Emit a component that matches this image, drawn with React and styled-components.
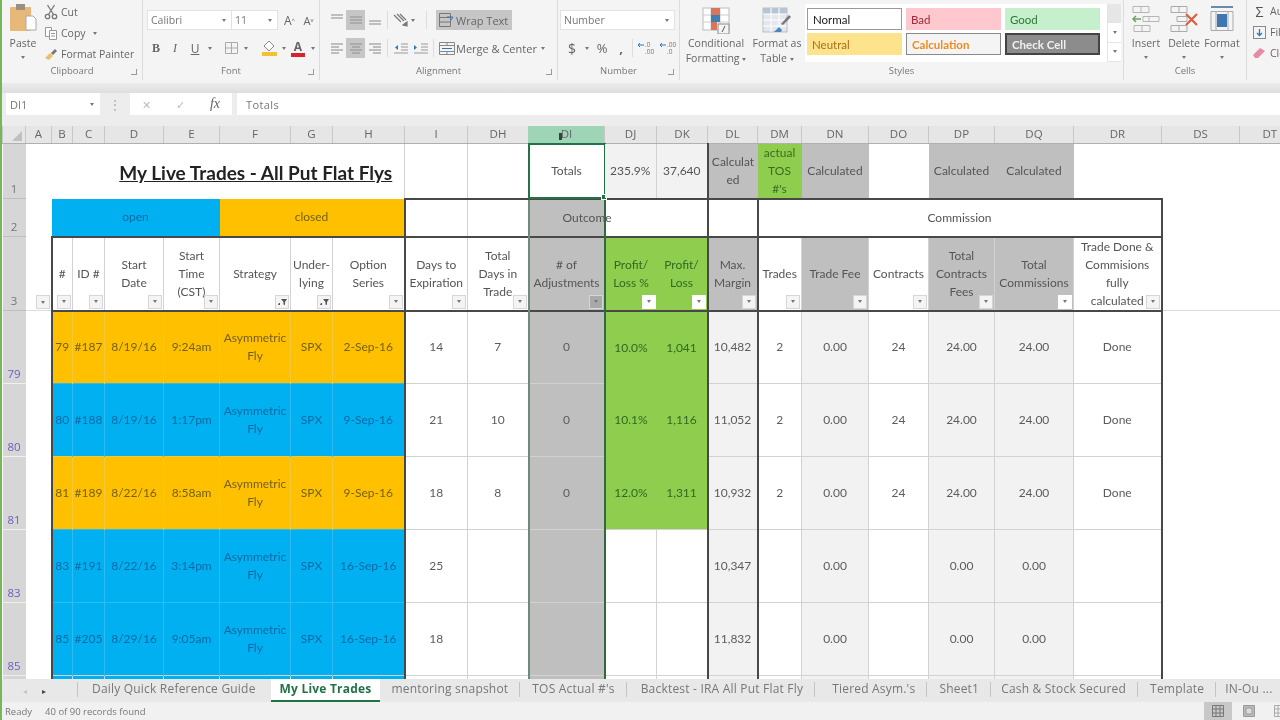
import styled, { createGlobalStyle } from 'styled-components';

const GlobalStyle = createGlobalStyle`
  html, body {
    margin: 0;
    padding: 0;
    overflow: hidden;
    background: #fff;
  }
`;

const UI = `"Open Sans", "Noto Sans", sans-serif`;
const SHEET = `Lato, "Liberation Sans", sans-serif`;

const ORANGE = '#ffc000';
const BLUE = '#00b0f0';
const GRAY = '#bfbfbf';
const GREEN = '#8fcd4e';
const PALE = '#f2f2f2';
const DARK = '#484848';
const GRID = '#d2d2d2';

const Page = styled.div`
  width: 1278px;
  height: 720px;
  border-left: 2px solid #78b65a;
  display: flex;
  flex-direction: column;
  overflow: hidden;
  font-family: ${UI};
  color: #555;
  filter: blur(0.5px);
`;

/* ribbon */
const Ribbon = styled.div`
  height: 83px;
  flex: none;
  display: flex;
  background: #f4f4f4;
  overflow: hidden;
`;

const Group = styled.section`
  width: ${(p) => p.$w}px;
  flex: none;
  display: flex;
  flex-direction: column;
  position: relative;
  box-sizing: border-box;
  border-right: ${(p) => (p.$last ? 'none' : '1px solid #dcdcdc')};
  margin-bottom: 3px;
`;

const GroupBody = styled.div`
  flex: 1;
  min-height: 0;
  display: flex;
  flex-direction: ${(p) => (p.$stack ? 'column' : 'row')};
  gap: ${(p) => p.$gap || 0}px;
  padding: ${(p) => p.$pad || '0'};
`;

const GroupLabel = styled.div`
  height: 16px;
  font-size: 9.5px;
  line-height: 14px;
  text-align: center;
  color: #777;
`;

const Launcher = styled.span`
  position: absolute;
  right: 5px;
  bottom: 5px;
  width: 5px;
  height: 5px;
  border-right: 1px solid #999;
  border-bottom: 1px solid #999;
`;

const BigButton = styled.div`
  width: ${(p) => p.$w}px;
  flex: none;
  display: flex;
  flex-direction: column;
  align-items: center;
  padding-top: ${(p) => p.$top ?? 6}px;
  font-size: 10.5px;
  line-height: 15px;
  text-align: center;
  color: #666;
  white-space: pre;

  svg { flex: none; margin-bottom: ${(p) => p.$iconGap ?? 3}px; }
`;

const Caret = styled.span`
  display: inline-block;
  width: 0;
  height: 0;
  border-left: 2.5px solid transparent;
  border-right: 2.5px solid transparent;
  border-top: 3px solid #777;
  vertical-align: middle;
  margin: ${(p) => p.$m || '0'};
`;

const ClipList = styled.div`
  display: flex;
  flex-direction: column;
  padding-top: 2px;
`;

const ClipItem = styled.div`
  height: 21px;
  display: flex;
  align-items: center;
  gap: 3px;
  font-size: 10.5px;
  color: #666;
  white-space: nowrap;
`;

const ToolRow = styled.div`
  height: 20px;
  display: flex;
  align-items: center;
  flex: none;
`;

const Select = styled.div`
  width: ${(p) => p.$w}px;
  height: 20px;
  box-sizing: border-box;
  background: #fff;
  border: 1px solid #e2e2e2;
  border-left: ${(p) => (p.$joined ? 'none' : '1px solid #e2e2e2')};
  padding: 0 5px 0 3px;
  display: flex;
  align-items: center;
  justify-content: space-between;
  font-size: 10.5px;
  color: #777;
  flex: none;
`;

const Tool = styled.div`
  width: ${(p) => p.$w}px;
  height: 20px;
  margin-left: ${(p) => p.$ml || 0}px;
  flex: none;
  display: flex;
  align-items: center;
  justify-content: center;
  font-family: ${(p) => (p.$serif ? '"Liberation Serif", serif' : UI)};
  font-size: ${(p) => p.$size || 12}px;
  font-weight: ${(p) => (p.$bold ? 700 : 400)};
  font-style: ${(p) => (p.$italic ? 'italic' : 'normal')};
  text-decoration: ${(p) => (p.$under ? 'underline' : 'none')};
  color: ${(p) => p.$ink || '#666'};
  background: ${(p) => (p.$on ? '#c6c6c6' : 'transparent')};
`;

const FontColorMark = styled.span`
  width: 14px;
  height: 17px;
  box-sizing: border-box;
  display: block;
  text-align: center;
  font-size: 12px;
  line-height: 13px;
  font-weight: 700;
  color: #666;
  border-bottom: 4px solid #d8232a;
`;

const ToolSep = styled.span`
  width: 1px;
  height: 18px;
  flex: none;
  background: #ddd;
  margin: 0 ${(p) => p.$m ?? 4}px;
`;

const TextTool = styled.div`
  height: 20px;
  display: flex;
  align-items: center;
  padding: 0 4px 0 2px;
  font-size: 11px;
  color: #666;
  white-space: nowrap;
  flex: none;
  background: ${(p) => (p.$on ? '#c6c6c6' : 'transparent')};
`;

const Gallery = styled.div`
  width: 302px;
  height: 58px;
  margin: 4px 0 0 3px;
  padding: 4px 0 0 2px;
  box-sizing: border-box;
  background: #fff;
  display: grid;
  grid-template-columns: repeat(3, 95px);
  grid-auto-rows: 22px;
  gap: 3px 4px;
  flex: none;
`;

const StyleChip = styled.div`
  box-sizing: border-box;
  padding-left: 5px;
  display: flex;
  align-items: center;
  font-family: ${SHEET};
  font-size: 11.5px;
  font-weight: ${(p) => (p.$bold ? 700 : 400)};
  color: ${(p) => p.$ink};
  background: ${(p) => p.$fill};
  border: ${(p) => p.$edge || 'none'};
`;

const GalleryScroll = styled.div`
  width: 13px;
  height: 58px;
  margin-top: 4px;
  flex: none;
  display: flex;
  flex-direction: column;
  background: #fff;
  border-left: 1px solid #e4e4e4;

  > span {
    flex: 1;
    display: flex;
    align-items: center;
    justify-content: center;
    border-bottom: 1px solid #e4e4e4;
  }

  > span:first-child { background: #e6e6e6; }
`;

const Edit = styled.div`
  display: flex;
  flex-direction: column;
  gap: 3px;
  padding: 2px 0 0 5px;
  font-size: 10.5px;
  color: #666;
  white-space: nowrap;
`;

const EditItem = styled.div`
  height: 18px;
  display: flex;
  align-items: center;
  gap: 3px;

  > * { flex: none; }
`;

const Sigma = styled.span`
  font-size: 14px;
  color: #555;
  width: 15px;
  text-align: center;
`;

const Band = styled.div`
  height: 10px;
  flex: none;
  background: linear-gradient(#ececec, #dedede);
`;

/* formula bar */
const FormulaBar = styled.div`
  height: 33px;
  flex: none;
  display: flex;
  align-items: flex-start;
  background: #ededed;
  font-size: 11px;
  color: #777;
`;

const NameBox = styled.div`
  width: 94px;
  height: 22px;
  margin-left: 4px;
  padding: 0 6px 0 4px;
  box-sizing: border-box;
  background: #fff;
  display: flex;
  align-items: center;
  justify-content: space-between;
  flex: none;
`;

const Grip = styled.span`
  width: 30px;
  height: 22px;
  flex: none;
  display: flex;
  align-items: center;
  justify-content: center;
  color: #aaa;
  font-size: 12px;
`;

const FormulaTools = styled.div`
  width: 102px;
  height: 22px;
  background: #fff;
  flex: none;
  display: flex;
  align-items: center;
  justify-content: space-between;
  padding: 0 12px 0 12px;
  box-sizing: border-box;
  color: #bbb;
`;

const Fx = styled.span`
  font-family: "Liberation Serif", serif;
  font-style: italic;
  font-size: 14px;
  color: #666;
`;

const FormulaInput = styled.div`
  flex: 1;
  height: 22px;
  margin-left: 5px;
  padding-left: 9px;
  background: #fff;
  display: flex;
  align-items: center;
  font-size: 11px;
  letter-spacing: 0.4px;
`;

/* sheet */
const Sheet = styled.div`
  flex: 1;
  min-height: 0;
  overflow: hidden;
  background: #fff;
`;

const Grid = styled.table`
  width: 1297px;
  table-layout: fixed;
  border-collapse: collapse;
  font-family: ${SHEET};
  font-size: 12px;
  line-height: 18px;
  color: #555;
`;

const ColHead = styled.th`
  height: 17px;
  padding: 0;
  position: relative;
  box-sizing: border-box;
  font-family: ${UI};
  font-weight: 400;
  font-size: 11.5px;
  line-height: 16px;
  color: #666;
  background: ${(p) => (p.$on ? '#9dd5b6' : '#e6e6e6')};
  border-left: 1px solid ${(p) => (p.$on ? '#9dd5b6' : '#c8c8c8')};
  border-bottom: 1px solid ${(p) => (p.$on ? '#217346' : '#b0b0b0')};
`;

const CornerMark = styled.span`
  position: absolute;
  right: 3px;
  bottom: 2px;
  width: 0;
  height: 0;
  border-left: 10px solid transparent;
  border-bottom: 10px solid #c0c0c0;
`;

const PointerMark = styled.span`
  position: absolute;
  left: 30px;
  top: 7px;
  width: 3px;
  height: 7px;
  background: #2c4a3a;
`;

const RowHead = styled.th`
  padding: 0 0 2px;
  box-sizing: border-box;
  vertical-align: bottom;
  font-family: ${UI};
  font-weight: 400;
  font-size: 11.5px;
  line-height: 14px;
  color: ${(p) => (p.$filtered ? '#6a5fc0' : '#777')};
  background: #d6d6d6;
  border-bottom: 1px solid ${(p) => (p.$filtered ? '#f0f0f0' : '#bdbdbd')};
`;

const Row = styled.tr`
  height: ${(p) => p.$h}px;
`;

const Cell = styled.td`
  position: relative;
  padding: 0;
  text-align: center;
  white-space: pre;
  color: ${(p) => p.$ink || '#555'};
  background: ${(p) => p.$fill || 'transparent'};
  border-left: ${(p) => p.$left || 'none'};
  border-top: ${(p) => p.$top || 'none'};
  ${(p) => (p.$bottom ? `border-bottom: ${p.$bottom};` : '')}
`;

const Title = styled.span`
  display: inline-block;
  padding: 4px 0 0 3px;
  font-size: 19px;
  line-height: 22px;
  font-weight: 700;
  color: #222;
  text-decoration: underline;
`;

const Overflowing = styled.span`
  display: block;
  text-align: left;
  padding-left: 33px;
`;

const Selection = styled.span`
  position: absolute;
  inset: -1px;
  border: 2px solid #217346;
  pointer-events: none;

  &::after {
    content: '';
    position: absolute;
    right: -3px;
    bottom: -3px;
    width: 4px;
    height: 4px;
    background: #217346;
    border: 1px solid #fff;
  }
`;

const FilterBox = styled.span`
  position: absolute;
  right: 1px;
  bottom: 1px;
  width: 14px;
  height: 14px;
  box-sizing: border-box;
  display: flex;
  align-items: center;
  justify-content: center;
  background: ${(p) => p.$tone || '#f4f4f4'};
  border: 1px solid ${(p) => (p.$tone === '#fff' ? '#fff' : '#d6d6d6')};
`;

/* sheet tabs */
const TabBar = styled.div`
  height: 23px;
  flex: none;
  display: flex;
  align-items: stretch;
  background: #e8e8e8;
  overflow: hidden;
  font-size: 12px;
  color: #777;
`;

const TabNav = styled.div`
  width: 76px;
  flex: none;
  display: flex;
  align-items: center;
  box-sizing: border-box;
  padding-left: 21px;
  gap: 15px;
  position: relative;
  font-size: 8px;

  &::after {
    content: '';
    position: absolute;
    right: 0;
    top: 3px;
    bottom: 5px;
    width: 1px;
    background: #c4c4c4;
  }
`;

const NavArrow = styled.span`
  color: ${(p) => (p.$dim ? '#c4c4c4' : '#444')};
`;

const Tab = styled.div`
  flex: none;
  position: relative;
  display: flex;
  align-items: center;
  padding: 0 ${(p) => (p.$active ? 9 : 12)}px 5px;
  white-space: nowrap;
  letter-spacing: 0.2px;
  margin-left: ${(p) => p.$ml || 0}px;
  ${(p) =>
    p.$active
      ? `
    background: #fff;
    color: #217346;
    font-weight: 700;
    border-bottom: 2px solid #217346;
    padding-bottom: 3px;
  `
      : ''}
  ${(p) =>
    p.$sep
      ? `
    &::after {
      content: '';
      position: absolute;
      right: 0;
      top: 3px;
      bottom: 5px;
      width: 1px;
      background: #c4c4c4;
    }
  `
      : ''}
`;

/* status bar */
const StatusBar = styled.div`
  height: 18px;
  flex: none;
  display: flex;
  align-items: center;
  background: #f1f1f1;
  font-size: 9.5px;
  color: #777;
  padding-left: 3px;
  overflow: hidden;
`;

const StatusText = styled.span`
  margin-right: ${(p) => p.$mr || 0}px;
`;

const ViewButtons = styled.div`
  margin-left: auto;
  margin-right: -14px;
  display: flex;
  height: 18px;
  gap: 3px;
`;

const ViewButton = styled.span`
  width: 28px;
  height: 18px;
  flex: none;
  display: flex;
  align-items: center;
  justify-content: center;
  background: ${(p) => (p.$on ? '#c8c8c8' : 'transparent')};
`;

/* icons */
const PasteIcon = () => (
  <svg width="28" height="30" viewBox="0 0 28 30">
    <rect x="1" y="4" width="21" height="24" rx="1" fill="#e8b878" />
    <rect x="7" y="1" width="9" height="6" fill="#9a8f80" />
    <path d="M17 13h7l3 3v11H17z" fill="#fff" stroke="#aaa" />
  </svg>
);

const CutIcon = () => (
  <svg width="14" height="16" viewBox="0 0 14 16" fill="none" stroke="#777" strokeWidth="1.3">
    <circle cx="3.5" cy="12.5" r="2.2" />
    <circle cx="10.5" cy="12.5" r="2.2" />
    <path d="M4.5 10.5L10.5 1M9.5 10.5L3.5 1" />
  </svg>
);

const CopyIcon = () => (
  <svg width="14" height="15" viewBox="0 0 14 15" fill="#fff" stroke="#999">
    <path d="M1.5 1.5h6v9h-6z" />
    <path d="M5.5 4.5h7v9h-7z" />
    <path d="M7 7.5h4M7 10h4" />
  </svg>
);

const PainterIcon = () => (
  <svg width="14" height="14" viewBox="0 0 14 14">
    <path d="M1 11l5-5 3 3-4 4z" fill="#e8c06a" />
    <path d="M7 6l4-4 2 2-4 4z" fill="#777" />
  </svg>
);

const BorderIcon = () => (
  <svg width="15" height="14" viewBox="0 0 15 14" fill="none" stroke="#aaa">
    <path d="M1.5 1.5h12v11h-12zM7.5 1.5v11M1.5 7h12" />
  </svg>
);

const BucketIcon = () => (
  <svg width="17" height="16" viewBox="0 0 17 16">
    <path d="M8 1l5 5-5 5-5-5z" fill="#fff" stroke="#888" />
    <rect x="1" y="12" width="15" height="4" fill="#f2c230" />
  </svg>
);

const Lines = ({ widths, align = 'center', top = 3 }) => (
  <svg width="16" height="14" viewBox="0 0 16 14" stroke="#999" strokeWidth="1.2">
    {widths.map((w, i) => {
      const x = align === 'left' ? 2 : align === 'right' ? 14 - w : 8 - w / 2;
      return <path key={i} d={`M${x} ${top + i * 3}h${w}`} />;
    })}
  </svg>
);

const OrientIcon = () => (
  <svg width="17" height="15" viewBox="0 0 17 15" fill="none" stroke="#777" strokeWidth="1.2">
    <path d="M2 2l7 7M5 1l7 7M8 1l6 6" />
    <path d="M11 12l4-3v4z" fill="#777" />
  </svg>
);

const IndentIcon = ({ flip }) => (
  <svg width="16" height="13" viewBox="0 0 16 13" stroke="#999">
    <path d="M8 2h7M8 5h7M8 8h7M1 11h14" />
    <path d={flip ? 'M1 3v5l3-2.5z' : 'M5 3v5L2 5.500z'} fill="#2b79b8" stroke="none" />
  </svg>
);

const WrapIcon = () => (
  <svg width="18" height="16" viewBox="0 0 18 16" fill="none" stroke="#777">
    <path d="M1.500 1.500h11v13h-11zM1.500 5.500h11M1.500 10h11" />
    <path d="M9 5h6l-2 3" stroke="#2b79b8" />
  </svg>
);

const MergeIcon = () => (
  <svg width="18" height="15" viewBox="0 0 18 15" fill="none" stroke="#888">
    <path d="M1.500 1.500h15v12h-15zM1.500 4.500h15M1.500 10.500h15M9 1.500v3M9 10.500v3" />
    <path d="M4 7.500h10" stroke="#2b79b8" />
  </svg>
);

const DecimalIcon = ({ top, bottom }) => (
  <svg width="20" height="16" viewBox="0 0 20 16" fontSize="6.500" fill="#777" fontFamily="Open Sans">
    <text x="8" y="7">{top}</text>
    <text x="8" y="14">{bottom}</text>
    <path d="M1 5h6M1 5l2-2M1 5l2 2" stroke="#2b79b8" fill="none" />
  </svg>
);

const CondIcon = () => (
  <svg width="28" height="27" viewBox="0 0 28 27">
    <rect x="1" y="1" width="26" height="22" fill="#fff" stroke="#bbb" />
    <path d="M1 8h26M1 15h26M9 1v22M18 1v22" stroke="#ccc" />
    <rect x="9" y="1" width="9" height="7" fill="#d9765a" />
    <rect x="9" y="8" width="9" height="7" fill="#3f7fb5" />
    <rect x="9" y="15" width="6" height="8" fill="#d9765a" />
    <rect x="16" y="17" width="11" height="10" fill="#f4f4f4" stroke="#888" />
    <path d="M20 25l3-6" stroke="#555" />
  </svg>
);

const TableIcon = () => (
  <svg width="30" height="27" viewBox="0 0 30 27">
    <rect x="1" y="1" width="24" height="24" fill="#e4e8ee" stroke="#bbb" />
    <rect x="1" y="1" width="24" height="6" fill="#b8c4d4" />
    <path d="M1 7h24M1 13h24M1 19h24M9 1v24M17 1v24" stroke="#fff" />
    <path d="M19 17l8-9 2 2-8 8z" fill="#777" />
    <path d="M12 25l5-5 3 3-1 2z" fill="#4d86bf" />
  </svg>
);

const InsertIcon = () => (
  <svg width="30" height="28" viewBox="0 0 30 28" fill="none" stroke="#b5b5b5">
    <path d="M2 1.500h16v6H2zM10 1.500v6M3 20.500h16v6H3zM11 20.500v6M12 11.500h16v5H12zM18 11.500v5" />
    <path d="M10 14H2M5 11l-3 3 3 3" stroke="#76a060" strokeWidth="1.500" />
  </svg>
);

const DeleteIcon = () => (
  <svg width="30" height="28" viewBox="0 0 30 28" fill="none" stroke="#aaa">
    <path d="M2 1.500h16v6H2zM10 1.500v6M2 20.500h16v6H2zM10 20.500v6M8 11.500h10v5H8z" />
    <path d="M17 9l11 11M28 9L17 20" stroke="#d8603f" strokeWidth="2.200" />
  </svg>
);

const FormatIcon = () => (
  <svg width="26" height="28" viewBox="0 0 26 28" fill="none" stroke="#aaa">
    <path d="M2 2h22" stroke="#2b5f93" strokeWidth="1.400" />
    <path d="M2 6.500h22v19H2zM7 6.500v19M19 6.500v19" />
    <rect x="8" y="9" width="10" height="13" fill="#3f77b2" stroke="none" />
  </svg>
);

const FillIcon = () => (
  <svg width="15" height="15" viewBox="0 0 15 15" fill="none" stroke="#888">
    <rect x="1.500" y="1.500" width="12" height="12" />
    <path d="M7.500 4v6M5 8l2.500 2.500L10 8" stroke="#2b79b8" strokeWidth="1.300" />
  </svg>
);

const EraserIcon = () => (
  <svg width="15" height="14" viewBox="0 0 15 14">
    <path d="M1 9l7-7 5 3-7 7H3z" fill="#e88aa2" />
  </svg>
);

const Funnel = () => (
  <svg width="9" height="8" viewBox="0 0 9 8">
    <path d="M3 1h6L7 4v3L5.500 6.500V4z" fill="#555" />
    <path d="M0 7h2V5H1z" fill="#555" />
  </svg>
);

const ViewGrid = ({ tone = '#888' }) => (
  <svg width="12" height="12" viewBox="0 0 12 12" fill="none" stroke={tone}>
    <path d="M.5.500h11v11H.5zM4 .500v11M8 .500v11M.5 4h11M.5 8h11" />
  </svg>
);

const ViewPage = () => (
  <svg width="12" height="12" viewBox="0 0 12 12" fill="#bbb" stroke="#999">
    <path d="M.5.500h11v11H.5z" />
    <path d="M3 3h6v6H3z" fill="#ddd" />
  </svg>
);

/* data */
const COLS = [
  ['A', 26], ['B', 21], ['C', 32], ['D', 59], ['E', 56], ['F', 71], ['G', 42], ['H', 72],
  ['I', 63], ['DH', 61], ['DI', 76], ['DJ', 52], ['DK', 51], ['DL', 50], ['DM', 44],
  ['DN', 67], ['DO', 60], ['DP', 66], ['DQ', 79], ['DR', 88], ['DS', 78], ['DT', 60],
];
const KEYS = COLS.map((c) => c[0]);

const HEADERS = {
  B: '#', C: 'ID #', D: 'Start\nDate', E: 'Start\nTime\n(CST)', F: 'Strategy', G: 'Under-\nlying',
  H: 'Option\nSeries', I: 'Days to\nExpiration', DH: 'Total\nDays in\nTrade', DI: '# of\nAdjustments',
  DJ: 'Profit/\nLoss %', DK: 'Profit/\nLoss', DL: 'Max.\nMargin', DM: 'Trades', DN: 'Trade Fee',
  DO: 'Contracts', DP: 'Total\nContracts\nFees', DQ: 'Total\nCommissions',
  DR: 'Trade Done &\nCommisions\nfully\ncalculated',
};

const HEAD_FILL = {
  DI: GRAY, DJ: GREEN, DK: GREEN, DL: GRAY, DN: GRAY, DP: GRAY, DQ: GRAY,
};

const ROWS = [
  { n: 79, fill: ORANGE, id: '#187', date: '8/19/16', time: '9:24am', series: '2-Sep-16', dte: 14, total: 7, adj: 0, pct: '10.0%', pl: '1,041', margin: '10,482', done: true },
  { n: 80, fill: BLUE, id: '#188', date: '8/19/16', time: '1:17pm', series: '9-Sep-16', dte: 21, total: 10, adj: 0, pct: '10.1%', pl: '1,116', margin: '11,052', done: true },
  { n: 81, fill: ORANGE, id: '#189', date: '8/22/16', time: '8:58am', series: '9-Sep-16', dte: 18, total: 8, adj: 0, pct: '12.0%', pl: '1,311', margin: '10,932', done: true },
  { n: 83, fill: BLUE, id: '#191', date: '8/22/16', time: '3:14pm', series: '16-Sep-16', dte: 25, margin: '10,347' },
  { n: 85, fill: BLUE, id: '#205', date: '8/29/16', time: '9:05am', series: '16-Sep-16', dte: 18, margin: '11,832' },
];

// extra left margin keeps each tab where the reference has it
const TABS = [
  ['Daily Quick Reference Guide', 2], ['My Live Trades', 3], ['mentoring snapshot', -1], ["TOS Actual #'s", 0],
  ['Backtest - IRA All Put Flat Fly', 2], ["Tiered Asym.'s", 5], ['Sheet1', 0], ['Cash & Stock Secured', -2],
  ['Template', 0], ['IN-Ou ...', -3],
];

const thick = `2px solid ${DARK}`;
const thin = `1px solid ${GRID}`;

// vertical rule on the left of a column; tier 1 = title row, 2 = band row, 3 = headers, 4 = data
const leftRule = (key, tier) => {
  if (key === 'A') return 'none';
  if (key === 'DL') return thick;
  if (tier === 1) return key === 'DH' || key === 'DK' || key === 'I' ? thin : 'none';
  if (key === 'I' || key === 'DM' || key === 'DS') return thick;
  if (key === 'DI') return '2px solid #6a8c7c';
  if (key === 'DJ') return '2px solid #2f6b3f';
  if (key === 'B') return tier > 2 ? thick : 'none';
  if (key === 'DT') return 'none';
  return tier === 3 && key === 'DK' ? 'none' : thin;
};

const dataFill = (key, row) => {
  if (['B', 'C', 'D', 'E', 'F', 'G', 'H'].includes(key)) return row.fill;
  if (key === 'DI') return GRAY;
  if (key === 'DJ' || key === 'DK') return row.pct ? GREEN : '#fff';
  if (['DL', 'DN', 'DP', 'DQ'].includes(key)) return PALE;
  return '#fff';
};

const dataInk = (key, row) => {
  if (['B', 'C', 'D', 'E', 'F', 'G', 'H'].includes(key)) return row.fill === ORANGE ? '#75601a' : '#0b6aa6';
  if (key === 'DJ' || key === 'DK') return '#2f6a22';
  return '#5c5c5c';
};

const dataText = (row) => ({
  B: String(row.n), C: row.id, D: row.date, E: row.time, F: 'Asymmetric\nFly', G: 'SPX', H: row.series,
  I: row.dte, DH: row.total, DI: row.adj, DJ: row.pct, DK: row.pl, DL: row.margin,
  DM: row.done ? 2 : '', DN: '0.00', DO: row.done ? 24 : '',
  DP: row.done ? '24.00' : '0.00', DQ: row.done ? '24.00' : '0.00', DR: row.done ? 'Done' : '',
});

const filterTone = (key) => {
  if (key === 'DI') return '#a9a9a9';
  if (key === 'DJ' || key === 'DK' || key === 'DQ') return '#fff';
  return undefined;
};

const TitleRow = () => (
  <Row $h={55}>
    <RowHead>1</RowHead>
    <Cell $left="none" />
    <Cell colSpan={2} />
    <Cell colSpan={5}><Title>My Live Trades - All Put Flat Flys</Title></Cell>
    <Cell $left={leftRule('I', 1)} />
    <Cell $left={leftRule('DH', 1)} />
    <Cell $fill="#fff">
      Totals
      <Selection />
    </Cell>
    <Cell $fill={PALE}>235.9%</Cell>
    <Cell $fill={PALE} $left={leftRule('DK', 1)}>37,640</Cell>
    <Cell $fill={GRAY} $left={thick}>{'Calculat\ned'}</Cell>
    <Cell $fill={GREEN} $ink="#3d6b22">{"actual\nTOS\n#'s"}</Cell>
    <Cell $fill={GRAY}>Calculated</Cell>
    <Cell />
    <Cell $fill={GRAY}>Calculated</Cell>
    <Cell $fill={GRAY}>Calculated</Cell>
    <Cell />
    <Cell />
    <Cell />
  </Row>
);

const BandRow = () => (
  <Row $h={38}>
    <RowHead>2</RowHead>
    <Cell />
    <Cell colSpan={4} $fill={BLUE} $ink="#0b6aa6">open</Cell>
    <Cell colSpan={3} $fill={ORANGE} $ink="#75601a">closed</Cell>
    <Cell $left={thick} $top={thick} />
    <Cell $left={thin} $top={thick} />
    <Cell $fill={GRAY} $left={leftRule('DI', 2)} $top={thick}>
      <Overflowing>Outcome</Overflowing>
    </Cell>
    <Cell colSpan={2} $left={leftRule('DJ', 2)} $top={thick} />
    <Cell $left={thick} $top={thick} />
    <Cell colSpan={6} $left={thick} $top={thick}>Commission</Cell>
    <Cell $left={thick} />
    <Cell />
  </Row>
);

const HeaderRow = () => (
  <Row $h={73}>
    <RowHead>3</RowHead>
    {KEYS.map((key) => {
      const boxed = key !== 'A' && key !== 'DS' && key !== 'DT';
      return (
        <Cell
          key={key}
          $fill={HEAD_FILL[key]}
          $ink={key === 'DJ' || key === 'DK' ? '#2f6a22' : undefined}
          $left={leftRule(key, 3)}
          $top={boxed ? thick : 'none'}
          $bottom={boxed ? undefined : '1px solid #dcdcdc'}
        >
          {HEADERS[key]}
          {key !== 'DS' && key !== 'DT' && (
            <FilterBox $tone={filterTone(key)}>
              {key === 'F' || key === 'G' ? <Funnel /> : <Caret />}
            </FilterBox>
          )}
        </Cell>
      );
    })}
  </Row>
);

const DataRow = ({ row, first }) => {
  const text = dataText(row);
  return (
    <Row $h={73}>
      <RowHead $filtered>{row.n}</RowHead>
      {KEYS.map((key) => {
        const i = KEYS.indexOf(key);
        const boxed = i > 0 && i < 20;
        const colored = i > 0 && i < 8;
        const soft = row.fill === ORANGE ? '#f2c93a' : '#2cbcf2';
        let left = leftRule(key, 4);
        if (colored && key !== 'B') left = `1px solid ${soft}`;
        if (key === 'DK' && row.pct) left = 'none';
        let top = 'none';
        if (boxed) top = first ? thick : `1px solid ${colored ? soft : GRID}`;
        if (!first && row.pct && (key === 'DJ' || key === 'DK')) top = 'none';
        return (
          <Cell key={key} $fill={dataFill(key, row)} $ink={dataInk(key, row)} $left={left} $top={top}>
            {text[key]}
          </Cell>
        );
      })}
    </Row>
  );
};

const TailRow = () => (
  <Row $h={6}>
    <RowHead $filtered />
    {KEYS.map((key, i) => (
      <Cell
        key={key}
        $fill={dataFill(key, { fill: BLUE })}
        $left={leftRule(key, 4)}
        $top={i > 0 && i < 20 ? thin : 'none'}
      />
    ))}
  </Row>
);

const App = () => {
  return (
    <>
      <GlobalStyle />
      <Page>
        <Ribbon>
          <Group $w={141}>
            <GroupBody>
              <BigButton $w={42} $top={3} $iconGap={3}>
                <PasteIcon />
                Paste
                <Caret $m="5px 0 0" />
              </BigButton>
              <ClipList>
                <ClipItem><CutIcon /> Cut</ClipItem>
                <ClipItem><CopyIcon /> Copy <Caret $m="0 0 0 4px" /></ClipItem>
                <ClipItem><PainterIcon /> Format Painter</ClipItem>
              </ClipList>
            </GroupBody>
            <GroupLabel>Clipboard</GroupLabel>
            <Launcher />
          </Group>

          <Group $w={177}>
            <GroupBody $stack $gap={8} $pad="10px 0 0 4px">
              <ToolRow>
                <Select $w={85}>Calibri <Caret /></Select>
                <Select $w={46} $joined>11 <Caret /></Select>
                <Tool $w={19} $size={12} $ml={2}>A<sup style={{ fontSize: 6 }}>^</sup></Tool>
                <Tool $w={19} $size={11}>A<sup style={{ fontSize: 6 }}>v</sup></Tool>
              </ToolRow>
              <ToolRow>
                <Tool $w={18} $bold $serif $size={12}>B</Tool>
                <Tool $w={20} $italic $serif $size={12}>I</Tool>
                <Tool $w={20} $under $size={12}>U</Tool>
                <Tool $w={10}><Caret /></Tool>
                <Tool $w={20} $ml={6}><BorderIcon /></Tool>
                <Tool $w={10}><Caret /></Tool>
                <Tool $w={20} $ml={8}><BucketIcon /></Tool>
                <Tool $w={9}><Caret /></Tool>
                <Tool $w={20}><FontColorMark>A</FontColorMark></Tool>
                <Tool $w={10}><Caret /></Tool>
              </ToolRow>
            </GroupBody>
            <GroupLabel>Font</GroupLabel>
            <Launcher />
          </Group>

          <Group $w={238}>
            <GroupBody $stack $gap={8} $pad="10px 0 0 7px">
              <ToolRow>
                <Tool $w={19}><Lines widths={[12, 12]} top={2} /></Tool>
                <Tool $w={19} $on><Lines widths={[12, 12, 12]} top={4} /></Tool>
                <Tool $w={19}><Lines widths={[12, 12]} top={8} /></Tool>
                <ToolSep $m={3} />
                <Tool $w={18}><OrientIcon /></Tool>
                <Tool $w={8}><Caret /></Tool>
                <ToolSep $m={9} />
                <TextTool $on><WrapIcon /> Wrap Text</TextTool>
              </ToolRow>
              <ToolRow>
                <Tool $w={19}><Lines widths={[12, 8, 12, 8]} align="left" /></Tool>
                <Tool $w={19} $on><Lines widths={[12, 8, 12, 8]} /></Tool>
                <Tool $w={19}><Lines widths={[12, 8, 12, 8]} align="right" /></Tool>
                <ToolSep $m={3} />
                <Tool $w={20}><IndentIcon /></Tool>
                <Tool $w={20}><IndentIcon flip /></Tool>
                <ToolSep $m={2} />
                <TextTool><MergeIcon /> Merge &amp; Center <Caret $m="0 0 0 4px" /></TextTool>
              </ToolRow>
            </GroupBody>
            <GroupLabel>Alignment</GroupLabel>
            <Launcher />
          </Group>

          <Group $w={122}>
            <GroupBody $stack $gap={8} $pad="10px 0 0 2px">
              <ToolRow>
                <Select $w={115}>Number <Caret /></Select>
              </ToolRow>
              <ToolRow>
                <Tool $w={22} $size={14} $ml={1}>$</Tool>
                <Tool $w={8}><Caret /></Tool>
                <Tool $w={22} $size={13}>%</Tool>
                <Tool $w={16} $size={13} $bold>,</Tool>
                <ToolSep $m={3} />
                <Tool $w={22}><DecimalIcon top=".0" bottom=".00" /></Tool>
                <Tool $w={22}><DecimalIcon top=".00" bottom=".0" /></Tool>
              </ToolRow>
            </GroupBody>
            <GroupLabel>Number</GroupLabel>
            <Launcher />
          </Group>

          <Group $w={444}>
            <GroupBody>
              <BigButton $w={72} $top={7} $iconGap={2}>
                <CondIcon />
                <span>{'Conditional\nFormatting '}<Caret /></span>
              </BigButton>
              <BigButton $w={50} $top={7} $iconGap={2}>
                <TableIcon />
                <span>{'Format as\nTable '}<Caret /></span>
              </BigButton>
              <Gallery>
                <StyleChip $fill="#fff" $ink="#222" $edge="1px solid #999">Normal</StyleChip>
                <StyleChip $fill="#ffc7ce" $ink="#9c2a3a">Bad</StyleChip>
                <StyleChip $fill="#c6efce" $ink="#2a7a32">Good</StyleChip>
                <StyleChip $fill="#fde38c" $ink="#a8701a">Neutral</StyleChip>
                <StyleChip $fill="#f4f4f4" $ink="#f08a20" $edge="1px solid #8a8a8a" $bold>Calculation</StyleChip>
                <StyleChip $fill="#8c8c8c" $ink="#f0f0f0" $edge="2px solid #444" $bold>Check Cell</StyleChip>
              </Gallery>
              <GalleryScroll>
                <span />
                <span><Caret /></span>
                <span><Caret /></span>
              </GalleryScroll>
            </GroupBody>
            <GroupLabel>Styles</GroupLabel>
          </Group>

          <Group $w={123}>
            <GroupBody $pad="0 0 0 3px">
              <BigButton $w={38} $top={5} $iconGap={3}>
                <InsertIcon />
                Insert
                <Caret $m="5px 0 0" />
              </BigButton>
              <BigButton $w={38} $top={5} $iconGap={3}>
                <DeleteIcon />
                Delete
                <Caret $m="5px 0 0" />
              </BigButton>
              <BigButton $w={38} $top={5} $iconGap={3}>
                <FormatIcon />
                Format
                <Caret $m="5px 0 0" />
              </BigButton>
            </GroupBody>
            <GroupLabel>Cells</GroupLabel>
          </Group>

          <Group $w={40} $last>
            <Edit>
              <EditItem><Sigma>Σ</Sigma> <span>AutoSum</span></EditItem>
              <EditItem><FillIcon /> <span>Fill</span></EditItem>
              <EditItem><EraserIcon /> <span>Clear</span></EditItem>
            </Edit>
          </Group>
        </Ribbon>
        <Band />

        <FormulaBar>
          <NameBox>DI1 <Caret /></NameBox>
          <Grip>⋮</Grip>
          <FormulaTools>
            <span>✕</span>
            <span>✓</span>
            <Fx>fx</Fx>
          </FormulaTools>
          <FormulaInput>Totals</FormulaInput>
        </FormulaBar>

        <Sheet>
          <Grid>
            <colgroup>
              <col style={{ width: 23 }} />
              {COLS.map(([key, w]) => <col key={key} style={{ width: w }} />)}
            </colgroup>
            <thead>
              <tr>
                <ColHead><CornerMark /></ColHead>
                {KEYS.map((key) => (
                  <ColHead key={key} $on={key === 'DI'}>
                    {key}
                    {key === 'DI' && <PointerMark />}
                  </ColHead>
                ))}
              </tr>
            </thead>
            <tbody>
              <TitleRow />
              <BandRow />
              <HeaderRow />
              {ROWS.map((row, i) => <DataRow key={row.n} row={row} first={i === 0} />)}
              <TailRow />
            </tbody>
          </Grid>
        </Sheet>

        <TabBar>
          <TabNav>
            <NavArrow $dim>◂</NavArrow>
            <NavArrow>▸</NavArrow>
          </TabNav>
          {TABS.map(([name, shift], i) => (
            <Tab key={name} $active={i === 1} $sep={i > 1 && i < 9} $ml={shift}>{name}</Tab>
          ))}
        </TabBar>

        <StatusBar>
          <StatusText $mr={13}>Ready</StatusText>
          <StatusText>40 of 90 records found</StatusText>
          <ViewButtons>
            <ViewButton $on><ViewGrid tone="#777" /></ViewButton>
            <ViewButton><ViewPage /></ViewButton>
            <ViewButton><ViewGrid tone="#aaa" /></ViewButton>
          </ViewButtons>
        </StatusBar>
      </Page>
    </>
  );
};

export default App;
